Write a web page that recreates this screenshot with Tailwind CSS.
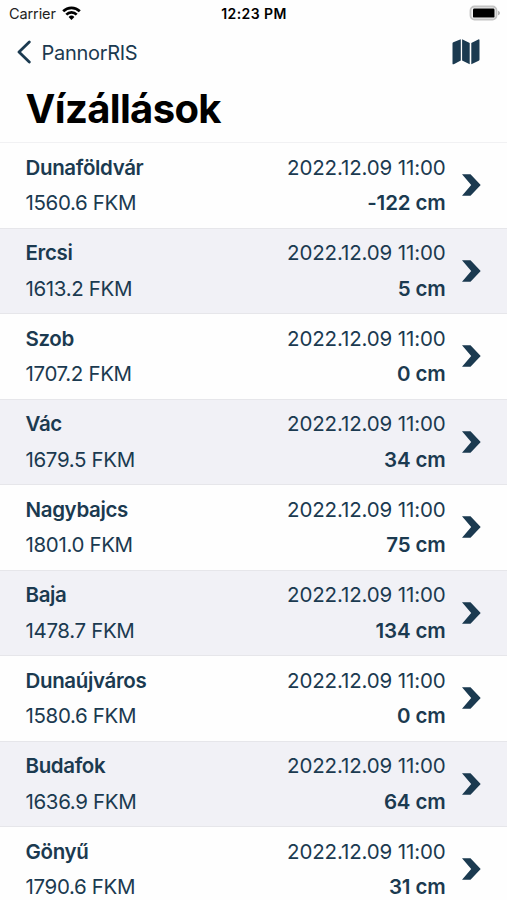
<!DOCTYPE html>
<html lang="hu">
<head>
<meta charset="utf-8">
<title>Vízállások</title>
<script src="https://cdn.jsdelivr.net/npm/@tailwindcss/browser@4"></script>
</head>
<body class="w-[507px] h-[900px] overflow-hidden bg-[#fefefe] font-['Inter','Liberation_Sans',sans-serif] text-[#1b3a50]">
<header class="h-[142.2px]">
  <div class="grid h-7 grid-cols-3 items-center pl-[9px] pr-[6px] text-black">
    <div class="flex items-center gap-[6px] text-[14.5px] text-[#222]">
      <span class="tracking-[-0.1px]">Carrier</span>
      <svg class="-translate-y-px" width="19" height="14" viewBox="0 0 19 14" fill="none" stroke="#000" stroke-width="2.7"><path d="M1.200 5.200a11.800 11.800 0 0 1 16.600 0"/><path d="M4.300 8.600a7.400 7.400 0 0 1 10.400 0"/><path d="M9.500 13.900L6.600 11a4.100 4.100 0 0 1 5.800 0z" fill="#000" stroke="none"/></svg>
    </div>
    <div class="text-center text-[14px] tracking-[0.4px] font-semibold whitespace-nowrap -translate-x-px -translate-y-px">12:23 PM</div>
    <svg class="justify-self-end -translate-y-px" width="32" height="16" viewBox="0 0 32 16"><rect x="1.500" y="1.500" width="26" height="13" rx="4" fill="#f4f4f4" stroke="#c4c4c4" stroke-width="1.800"/><rect x="4" y="3.600" width="21.500" height="9" rx="1.200" fill="#000"/><path d="M29 5.700c2.700 1 2.700 3.600 0 4.600z" fill="#b5b5b5"/></svg>
  </div>
  <div class="flex h-12 items-center justify-between pl-[17px] pr-[27px]">
    <div class="flex items-center gap-[10.5px]">
      <svg width="14" height="24" viewBox="0 0 14 24" fill="none" stroke="#1b3a50" stroke-width="2.8" stroke-linecap="round" stroke-linejoin="round"><path d="M12.300 2L2 12l10.300 10"/></svg>
      <span class="translate-y-[0.5px] text-[20px] tracking-[-0.3px]">PannorRIS</span>
    </div>
    <svg width="28" height="26" viewBox="0 0 28 26" fill="#1b3a50"><path d="M0.500 4.500Q0.500 3.600 1.300 3.200L8.800 0.300V21.600L1.800 25.200Q0.500 25.700 0.500 24.400zM10.100 0.300L17.700 4V25.300L10.100 21.600zM19.300 4L26.300 0.500Q27.500 0 27.500 1.300V20.500Q27.500 21.400 26.700 21.800L19.300 25.300z"/></svg>
  </div>
  <h1 class="pl-[25.5px] pt-[8px] text-[40px] leading-[50px] font-bold tracking-[-0.65px] text-black">Vízállások</h1>
</header>
<main id="stations"></main>
<script>
const stations = [
  ["Dunaföldvár", "1560.6", "-122"],
  ["Ercsi", "1613.2", "5"],
  ["Szob", "1707.2", "0"],
  ["Vác", "1679.5", "34"],
  ["Nagybajcs", "1801.0", "75"],
  ["Baja", "1478.7", "134"],
  ["Dunaújváros", "1580.6", "0"],
  ["Budafok", "1636.9", "64"],
  ["Gönyű", "1790.6", "31"]
];
document.getElementById("stations").innerHTML = stations.map(([name, km, level]) => `
  <section class="flex h-[85.5px] items-center justify-between border-t border-[#e6e6ea] first:border-[#f1f1f3] pl-[25.5px] pr-[26px] text-[20.5px] leading-[35.5px] even:bg-[#f1f1f6]">
    <div>
      <div class="font-semibold tracking-[-0.35px]">${name}</div>
      <div class="tracking-[-0.35px]">${km} FKM</div>
    </div>
    <div class="flex items-center gap-[16.5px]">
      <div class="text-right">
        <div class="tracking-[-0.14px]">2022.12.09 11:00</div>
        <div class="font-semibold tracking-[-0.15px]">${level} cm</div>
      </div>
      <svg width="19" height="22" viewBox="0 0 19 22" fill="#1b3a50"><path d="M0 0.300H8.500L18.700 11L8.500 21.700H0L9.200 11z"/></svg>
    </div>
  </section>`).join("");
</script>
</body>
</html>
